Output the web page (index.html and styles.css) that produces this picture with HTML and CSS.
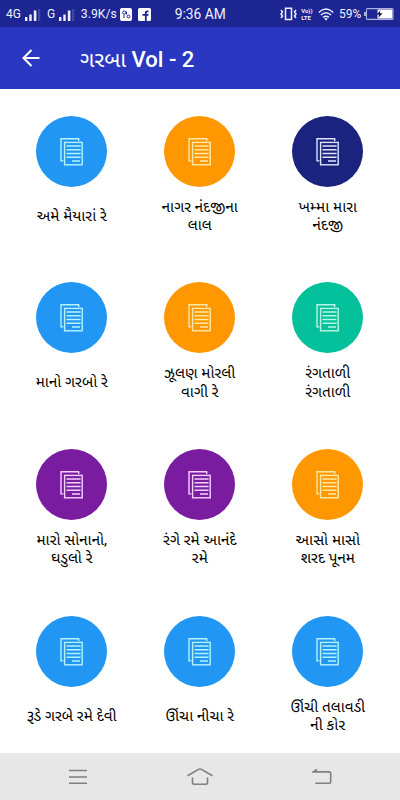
FILE: index.html
```html
<!DOCTYPE html>
<html lang="gu">
<head>
    <meta charset="UTF-8">
    <meta name="viewport" content="width=device-width, initial-scale=1.0">
    <title>ગરબા Vol - 2</title>
    <link rel="stylesheet" href="styles.css">
</head>
<body>

    <!-- page icon, used by every song -->
    <svg class="sprite" width="0" height="0">
        <symbol id="pages" viewBox="0 0 71 71">
            <path d="M42.7 25V22.7H25V44.9H27.4" />
            <rect x="28.6" y="26.4" width="17.6" height="22.4" />
            <path d="M30.5 30H44.6M30.5 33.7H44.6M30.5 37.5H44.6M30.5 41.2H44.6M36 45H44" />
        </symbol>
    </svg>

    <div class="screen">
        <header>
            <div class="status">
                <span class="net">4G</span>
                <svg class="signal" width="16" height="12" viewBox="0 0 16 12"><path d="M0 8h2.400v4H0zM4.300 5.500h2.400V12H4.300zM8.800 1.500h2.600V12H8.800z" fill="#eef0ff"/><path d="M13 0h2.300v12H13z" fill="#3b47ac"/></svg>
                <span class="net net-g">G</span>
                <svg class="signal" width="16" height="12" viewBox="0 0 16 12"><path d="M0 8h2.400v4H0zM4.300 5.500h2.400V12H4.300zM8.800 1.500h2.600V12H8.800z" fill="#eef0ff"/><path d="M13 0h2.300v12H13z" fill="#3b47ac"/></svg>
                <span class="speed">3.9K/s</span>
                <svg class="app" width="12" height="13" viewBox="0 0 12 13"><rect width="12" height="13" rx="2" fill="#fff"/><g fill="none" stroke="#1c2591"><circle cx="4.200" cy="4.500" r="1.600"/><circle cx="8.500" cy="8.500" r="1.400"/><path d="M4 6.500v3.500M6.500 3.500v3"/></g></svg>
                <svg class="fb" width="13" height="13" viewBox="0 0 13 13"><rect width="13" height="13" rx="1.500" fill="#fff"/><path d="M10.500 3.300H9.200q-1.400 0-1.400 1.400V13M4.500 6.800h6" fill="none" stroke="#1c2591" stroke-width="1.800"/></svg>
                <span class="clock">9:36 AM</span>
                <svg class="vibrate" width="17" height="14" viewBox="0 0 17 14"><path d="M5.500 1.200h6v11.300h-6zM1 3l1.500 2L1 7l1.500 2L1 11M16 3l-1.500 2L16 7l-1.500 2 1.500 2" fill="none" stroke="#eef0ff" stroke-width="1.500"/></svg>
                <span class="lte"><b>Vo))</b><b>LTE</b></span>
                <svg class="wifi" width="16" height="13" viewBox="0 0 16 13"><path d="M.7 4.400Q8-2.200 15.300 4.400M2.900 7Q8 2.400 13.100 7M5.100 9.400Q8 6.900 10.900 9.400" fill="none" stroke="#eef0ff" stroke-width="1.400"/><path d="M6.100 10.500Q8 9.300 9.900 10.500L8 12.500z" fill="#eef0ff"/></svg>
                <span class="percent">59%</span>
                <svg class="battery" width="30" height="12" viewBox="0 0 30 12"><rect x="2.500" y=".6" width="26.500" height="10.800" rx="1" fill="none" stroke="#aab0e0" stroke-width="1.100"/><path d="M0 4h2v4H0z" fill="#aab0e0"/><path d="M13.500 1.500h14.800v9H13.500z" fill="#fff"/><path d="M16.300 2.500L12.500 6.700h2.500L14.500 9.800l4-4.500h-2.600z" fill="#111850"/></svg>
            </div>
            <div class="toolbar">
                <svg class="back" width="18" height="18" viewBox="0 0 18 18"><path d="M17.500 9H1.500M9.500 1L1.500 9l8 8" fill="none" stroke="#fff" stroke-width="2"/></svg>
                <h1><span class="guj">ગરબા</span> Vol - 2</h1>
            </div>
        </header>

        <main class="songs">
            <div class="song"><svg class="circle blue"><use href="#pages"/></svg><p>અમે મૈયારાં રે</p></div>
            <div class="song"><svg class="circle orange"><use href="#pages"/></svg><p>નાગર નંદજીના<br>લાલ</p></div>
            <div class="song"><svg class="circle navy"><use href="#pages"/></svg><p>ખમ્મા મારા<br>નંદજી</p></div>

            <div class="song"><svg class="circle blue"><use href="#pages"/></svg><p>માનો ગરબો રે</p></div>
            <div class="song"><svg class="circle orange"><use href="#pages"/></svg><p>ઝૂલણ મોરલી<br>વાગી રે</p></div>
            <div class="song"><svg class="circle green"><use href="#pages"/></svg><p>રંગતાળી<br>રંગતાળી</p></div>

            <div class="song"><svg class="circle purple"><use href="#pages"/></svg><p>મારો સોનાનો,<br>ઘડુલો રે</p></div>
            <div class="song"><svg class="circle purple"><use href="#pages"/></svg><p>રંગે રમે આનંદે<br>રમે</p></div>
            <div class="song"><svg class="circle orange"><use href="#pages"/></svg><p>આસો માસો<br>શરદ પૂનમ</p></div>

            <div class="song"><svg class="circle blue"><use href="#pages"/></svg><p>રૂડે ગરબે રમે દેવી</p></div>
            <div class="song"><svg class="circle blue"><use href="#pages"/></svg><p>ઊંચા નીચા રે</p></div>
            <div class="song"><svg class="circle blue"><use href="#pages"/></svg><p>ઊંચી તલાવડી<br>ની કોર</p></div>
        </main>

        <nav>
            <svg width="20" height="18" viewBox="0 0 20 18"><path d="M1 2.500h18M1 9h18M1 15.200h18"/></svg>
            <svg width="28" height="18" viewBox="0 0 28 18"><path d="M1.500 7.800L12.500 1.400q1.500-.8 3 0l11 6.400M6.500 9.500v5q0 1.700 1.700 1.700h11.600q1.700 0 1.700-1.700v-5"/></svg>
            <svg width="20" height="18" viewBox="0 0 20 18"><path d="M5 1.500L1.300 3.900H17q1.700 0 1.700 1.700v7.900q0 1.700-1.700 1.700H3.300"/></svg>
        </nav>
    </div>

</body>
</html>
```
FILE: styles.css
```css
body{
    margin: 0;
    font-family: Roboto, "Noto Sans Gujarati", "Noto Sans", sans-serif;
    background: #ffffff;
}

.sprite{
    display: block;
}

.screen{
    display: flex;
    flex-direction: column;
    width: 400px;
    height: 800px;
    overflow: hidden;
}

/* status bar */
.status{
    display: flex;
    align-items: center;
    box-sizing: border-box;
    height: 27px;
    padding: 1px 6px 0 6px;
    background: #1c2591;
    color: #eef0ff;
    font-size: 12px;
    white-space: nowrap;
}

.status svg{
    flex: none;
}

.signal{
    margin-top: 2px;
}

.net{
    width: 19px;
    font-size: 12px;
}

.net-g{
    width: 12px;
    margin-left: 6px;
}

.speed{
    width: 39px;
    margin-left: 6px;
    font-size: 12.2px;
}

.fb{
    margin-left: 6px;
}

.clock{
    width: 106px;
    margin-left: 24px;
    font-size: 13.8px;
}

.lte{
    display: flex;
    flex-direction: column;
    width: 13px;
    margin: 0 4px;
    font-size: 6px;
    line-height: 7px;
}

.percent{
    width: 25px;
    margin-left: 5px;
}

/* title */
.toolbar{
    display: flex;
    align-items: center;
    height: 62px;
    padding-left: 22px;
    background: #2a38c1;
    color: #ffffff;
}

.toolbar h1{
    margin: 3px 0 0 40px;
    font-size: 22px;
    font-weight: 500;
    line-height: 30px;
}

.guj{
    font-weight: 400;
}

/* list of songs */
.songs{
    flex: 1;
    display: grid;
    grid-template-columns: repeat(3, 128px);
    grid-auto-rows: 166.7px;
    min-height: 0;
    padding: 26.5px 0 0 7.8px;
    overflow: hidden;
}

.song{
    display: flex;
    flex-direction: column;
    align-items: center;
}

.circle{
    flex: none;
    width: 71px;
    height: 71px;
    border-radius: 50%;
    fill: none;
    stroke-width: 1.4;
}

.song p{
    display: flex;
    flex-direction: column;
    justify-content: center;
    height: 59px;
    margin: 0;
    color: #000000;
    font-size: 15.3px;
    line-height: 18.5px;
    text-align: center;
    white-space: nowrap;
}

.blue{ background: #2196f3; stroke: #b5f3ff; }
.orange{ background: #ff9800; stroke: #ffe9a8; }
.navy{ background: #1a237e; stroke: #dfe3ff; }
.green{ background: #04c09b; stroke: #b5f8e4; }
.purple{ background: #7a1c9f; stroke: #f6d2ff; }

/* bottom buttons */
nav{
    display: flex;
    flex: none;
    align-items: center;
    justify-content: space-between;
    box-sizing: border-box;
    height: 47px;
    padding: 0 68px 0 68px;
    background: #e7e7e7;
}

nav svg{
    fill: none;
    stroke: #808080;
    stroke-width: 1.6;
}
```
